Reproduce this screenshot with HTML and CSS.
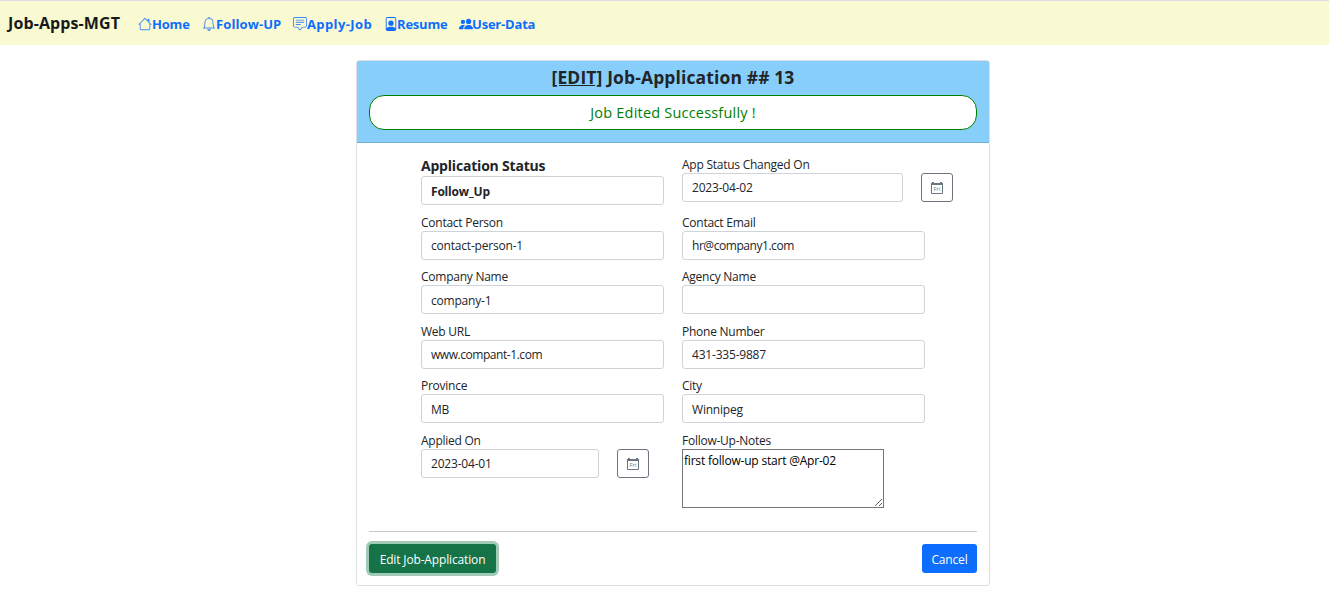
FILE: index.html
```html
<!DOCTYPE html>
<html lang="en">
<head>
<meta charset="utf-8">
<title>Job-Apps-MGT</title>
<link rel="stylesheet" href="styles.css">
</head>
<body>
<nav class="navbar">
  <a class="brand">Job-Apps-MGT</a>
  <a class="nav-link home"><svg class="icon" viewBox="0 0 16 16"><path d="M8.707 1.5a1 1 0 0 0-1.414 0L.646 8.146a.5.5 0 0 0 .708.708L2 8.207V13.5A1.5 1.5 0 0 0 3.500 15h9a1.500 1.500 0 0 0 1.500-1.500V8.207l.646.647a.5.5 0 0 0 .708-.708L13 5.793V2.500a.5.5 0 0 0-.5-.5h-1a.5.5 0 0 0-.5.5v1.293zM13 7.207V13.500a.5.5 0 0 1-.5.5h-9a.5.5 0 0 1-.5-.5V7.207l5-5z"/></svg><span>Home</span></a>
  <a class="nav-link follow"><svg class="icon" viewBox="0 0 16 16"><path d="M8 16a2 2 0 0 0 2-2H6a2 2 0 0 0 2 2M8 1.918l-.797.161A4 4 0 0 0 4 6c0 .628-.134 2.197-.459 3.742-.16.767-.376 1.566-.663 2.258h10.244c-.287-.692-.502-1.490-.663-2.258C12.134 8.197 12 6.628 12 6a4 4 0 0 0-3.203-3.920zM14.220 12c.223.447.481.801.780 1H1c.299-.199.557-.553.780-1C2.680 10.200 3 6.880 3 6c0-2.420 1.720-4.440 4.005-4.901a1 1 0 1 1 1.990 0A5 5 0 0 1 13 6c0 .880.320 4.200 1.220 6"/></svg><span>Follow-UP</span></a>
  <a class="nav-link apply"><svg class="icon" viewBox="0 0 16 16"><path d="M14 1a1 1 0 0 1 1 1v8a1 1 0 0 1-1 1h-2.500a2 2 0 0 0-1.600.800L8 14.333 6.100 11.800a2 2 0 0 0-1.600-.800H2a1 1 0 0 1-1-1V2a1 1 0 0 1 1-1zM2 0a2 2 0 0 0-2 2v8a2 2 0 0 0 2 2h2.500a1 1 0 0 1 .800.400l1.900 2.533a1 1 0 0 0 1.600 0l1.900-2.533a1 1 0 0 1 .800-.400H14a2 2 0 0 0 2-2V2a2 2 0 0 0-2-2z"/><path d="M3 3.500a.5.5 0 0 1 .5-.5h9a.5.5 0 0 1 0 1h-9a.5.5 0 0 1-.5-.5M3 6a.5.5 0 0 1 .5-.5h9a.5.5 0 0 1 0 1h-9A.5.5 0 0 1 3 6m0 2.500a.5.5 0 0 1 .5-.5h5a.5.5 0 0 1 0 1h-5a.5.5 0 0 1-.5-.5"/></svg><span>Apply-Job</span></a>
  <a class="nav-link resume"><svg class="icon" viewBox="0 0 16 16"><path d="M11 7a3 3 0 1 1-6 0 3 3 0 0 1 6 0"/><path d="M4 0a2 2 0 0 0-2 2v12a2 2 0 0 0 2 2h8a2 2 0 0 0 2-2V2a2 2 0 0 0-2-2zM4 1h8a1 1 0 0 1 1 1v10.800C12.300 11.700 10.900 11 8 11s-4.300.700-5 1.800V2a1 1 0 0 1 1-1" fill-rule="evenodd"/></svg><span>Resume</span></a>
  <a class="nav-link users"><svg class="icon" viewBox="0 0 16 16"><path d="M7 14s-1 0-1-1 1-4 5-4 5 3 5 4-1 1-1 1zm4-6a3 3 0 1 0 0-6 3 3 0 0 0 0 6m-5.784 6A2.240 2.240 0 0 1 5 13c0-1.355.680-2.750 1.936-3.720A6.300 6.300 0 0 0 5 9c-4 0-5 3-5 4s1 1 1 1zM4.500 8a2.500 2.500 0 1 0 0-5 2.500 2.500 0 0 0 0 5"/></svg><span>User-Data</span></a>
</nav>
<main class="card">
  <header class="card-header">
    <h1 class="title"><u>[EDIT]</u> Job-Application ## 13</h1>
    <div class="notice"><span>Job Edited Successfully !</span></div>
  </header>
  <form class="card-body">
    <div class="columns">
      <div class="column">
        <div class="field status"><label>Application Status</label><div class="control strong">Follow_Up</div></div>
        <div class="field"><label>Contact Person</label><div class="control">contact-person-1</div></div>
        <div class="field"><label>Company Name</label><div class="control low">company-1</div></div>
        <div class="field"><label>Web URL</label><div class="control tight">www.compant-1.com</div></div>
        <div class="field"><label>Province</label><div class="control low">MB</div></div>
        <div class="field"><label>Applied On</label>
          <div class="date-row"><div class="control date-short">2023-04-01</div>
          <button type="button" class="calendar"><svg viewBox="0 0 12 12"><path d="M.5 2v9.500h11V2" fill="none" stroke="currentColor"/><path d="M0 1h1V0h2v1h6V0h2v1h1v2H0z"/><text x="6" y="9" text-anchor="middle">Fri</text></svg></button></div></div>
      </div>
      <div class="column">
        <div class="field changed"><label>App Status Changed On</label>
          <div class="date-row"><div class="control date-long">2023-04-02</div>
          <button type="button" class="calendar"><svg viewBox="0 0 12 12"><path d="M.5 2v9.500h11V2" fill="none" stroke="currentColor"/><path d="M0 1h1V0h2v1h6V0h2v1h1v2H0z"/><text x="6" y="9" text-anchor="middle">Fri</text></svg></button></div></div>
        <div class="field"><label>Contact Email</label><div class="control tight">hr@company1.com</div></div>
        <div class="field"><label>Agency Name</label><div class="control"></div></div>
        <div class="field"><label>Phone Number</label><div class="control">431-335-9887</div></div>
        <div class="field"><label>City</label><div class="control low">Winnipeg</div></div>
        <div class="field"><label>Follow-Up-Notes</label><textarea class="notes">first follow-up start @Apr-02</textarea></div>
      </div>
    </div>
    <div class="actions">
      <button type="button" class="btn submit">Edit Job-Application</button>
      <button type="button" class="btn cancel">Cancel</button>
    </div>
  </form>
</main>
</body>
</html>
```
FILE: styles.css
```css
* { box-sizing: border-box; }
body {
  margin: 0;
  background: #fff;
  color: #212529;
  font-family: "Open Sans", "Noto Sans", sans-serif;
  font-size: 12px;
  overflow: hidden;
}
.navbar {
  display: flex;
  align-items: center;
  height: 45px;
  padding: 1px 8px 0;
  border-top: 1px solid #dbdde0;
  background: #fafad2;
  font-weight: 700;
  white-space: nowrap;
}
.brand { width: 130px; padding-bottom: 2px; font-size: 16px; letter-spacing: .1px; color: #17191b; }
.nav-link {
  display: flex;
  align-items: center;
  color: #0d6efd;
  font-size: 13px;
  letter-spacing: -.2px;
}
.home { width: 64px; }
.follow { width: 91px; letter-spacing: .1px; }
.apply { width: 91px; letter-spacing: .4px; }
.resume { width: 75px; }
.icon { width: 14px; height: 14px; fill: currentColor; flex: none; }
.home .icon, .follow .icon, .apply .icon { opacity: .8; }
.resume .icon, .users .icon { margin-right: -1px; }
.card {
  width: 634px;
  height: 526px;
  margin: 15px 0 0 356px;
  border: 1px solid #dedfe0;
  border-radius: 3px;
}
.card-header {
  height: 82px;
  padding: 3px 12px 0;
  background: #87cefa;
  border-bottom: 1px solid #74b1d7;
  border-radius: 2px 2px 0 0;
  text-align: center;
}
.title { margin: 0; font-size: 17.5px; line-height: 26px; font-weight: 700; letter-spacing: .12px; }
.notice {
  height: 35px;
  margin-top: 5px;
  border: 1px solid green;
  border-radius: 15px;
  background: #fff;
  color: green;
  font-size: 14.5px;
  font-weight: 500;
  letter-spacing: .2px;
  line-height: 33px;
}
.card-body { padding: 12px 12px 0; }
.columns {
  display: grid;
  grid-template-columns: 243px 271px;
  column-gap: 18px;
  height: 377px;
  padding-left: 52px;
  border-bottom: 1px solid #c7c8c9;
}
.field { height: 54.45px; }
.field label { display: block; height: 18px; line-height: 20px; font-size: 12px; letter-spacing: -.25px; white-space: nowrap; }
.status, .changed { height: 58px; }
.status { padding-top: 3px; }
.status label { font-size: 14px; font-weight: 700; line-height: 16px; letter-spacing: -.2px; }
.control {
  width: 243px;
  height: 29px;
  border: 1px solid #ced4da;
  border-radius: 3px;
  padding: 0 9px;
  line-height: 28px;
  font-size: 12px;
  letter-spacing: -.2px;
  background: #fff;
}
.strong { font-weight: 700; line-height: 29px; }
.low { line-height: 30px; }
.tight { letter-spacing: -.45px; }
.date-row { display: flex; gap: 18px; }
.date-short { width: 178px; }
.date-long { width: 221px; }
.calendar {
  display: grid;
  place-items: center;
  width: 32px;
  height: 29px;
  padding: 1px 0 0;
  border: 1px solid #6c757d;
  border-radius: 3px;
  background: #fff;
  color: #6c757d;
}
.calendar svg { width: 12px; height: 12px; fill: currentColor; }
.calendar text { font-size: 6px; font-family: "Open Sans", sans-serif; }
.notes {
  display: block;
  width: 202px;
  height: 59px;
  padding: 2px 1px;
  border: 1px solid #767676;
  border-radius: 0;
  font: 12px/18px "Open Sans", sans-serif;
  letter-spacing: -.2px;
  color: #000;
}
.actions { display: flex; justify-content: space-between; padding-top: 12px; }
.btn {
  height: 29px;
  padding: 2px 0 0;
  border: 0;
  border-radius: 3px;
  color: #fff;
  font: 12px "Open Sans", sans-serif;
  letter-spacing: -.15px;
}
.submit { width: 127px; background: #157347; box-shadow: 0 0 0 3px #a1cbb7; }
.cancel { width: 55px; background: #0d6efd; }
```
